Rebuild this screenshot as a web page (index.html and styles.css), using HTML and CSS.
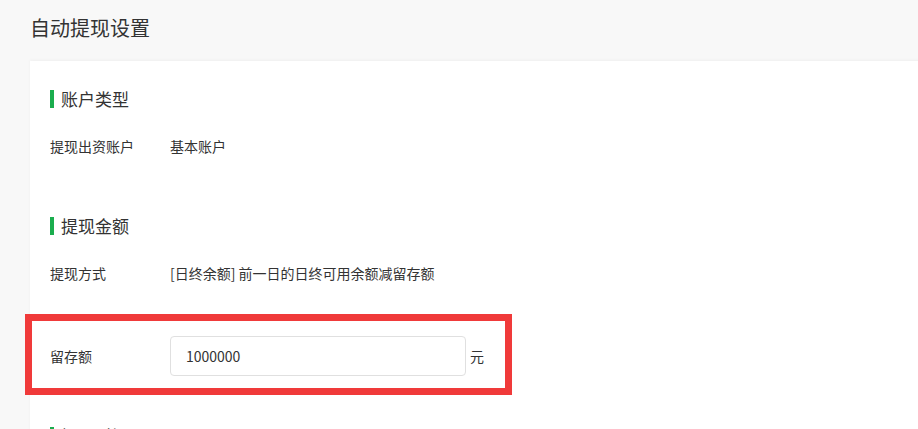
FILE: index.html
```html
<!DOCTYPE html>
<html lang="zh-CN">
<head>
    <meta charset="UTF-8">
    <meta name="viewport" content="width=device-width, initial-scale=1.0">
    <title>自动提现设置</title>
    <link rel="stylesheet" href="styles.css">
</head>
<body>

    <div class="page-header">
        <h1>自动提现设置</h1>
    </div>

    <div class="card">
        <div class="section">
            <h2 class="section-title">账户类型</h2>
            <div class="form-item">
                <label class="form-label">提现出资账户</label>
                <div class="form-value">基本账户</div>
            </div>
        </div>

        <div class="section">
            <h2 class="section-title">提现金额</h2>
            <div class="form-item">
                <label class="form-label">提现方式</label>
                <div class="form-value">[日终余额] 前一日的日终可用余额减留存额</div>
            </div>
            <div class="form-item highlighted">
                <label class="form-label" for="reserveAmount">留存额</label>
                <div class="form-value">
                    <input type="text" id="reserveAmount" value="1000000">
                    <span class="unit">元</span>
                </div>
                <span class="highlight-box"></span>
            </div>
        </div>

        <div class="section">
            <h2 class="section-title">提现时间</h2>
        </div>
    </div>

</body>
</html>
```

FILE: styles.css
```css
body {
    margin: 0;
    padding: 0;
    background-color: #f8f8f8;
    color: #333;
    font-family: "Microsoft YaHei", "Noto Sans CJK SC", sans-serif;
    font-size: 14px;
    overflow: hidden;
}

.page-header {
    height: 61px;
    padding-left: 30px;
    display: flex;
    align-items: center;
}

.page-header h1 {
    margin: 0;
    font-size: 20px;
    font-weight: normal;
    line-height: 1;
    margin-top: -6px;
}

.card {
    margin-left: 30px;
    margin-right: -20px;
    padding: 29px 20px 0;
    background-color: #fff;
    box-shadow: 0 -1px 3px rgba(0, 0, 0, 0.04);
    min-height: 400px;
}

.section {
    padding-bottom: 8px;
}

.section-title {
    margin: 0 0 18px;
    font-size: 17px;
    font-weight: normal;
    line-height: 18px;
    height: 18px;
    padding-left: 7px;
    border-left: 4px solid #1aad4e;
    display: flex;
    align-items: center;
}

.form-item {
    display: flex;
    align-items: center;
    height: 40px;
    margin-bottom: 43px;
}

.form-label {
    width: 120px;
    flex-shrink: 0;
}

.form-value {
    display: flex;
    align-items: center;
}

input[type="text"] {
    width: 296px;
    height: 40px;
    box-sizing: border-box;
    padding: 0 15px;
    border: 1px solid #e0e0e0;
    border-radius: 4px;
    font-family: inherit;
    font-size: 14px;
    color: #333;
    outline: none;
}

.unit {
    margin-left: 4px;
}

/* red frame drawn over the reserve amount row */
.highlighted {
    position: relative;
}

.highlight-box {
    position: absolute;
    left: -25px;
    top: -22px;
    width: 487px;
    height: 81px;
    box-sizing: border-box;
    border: 7px solid #f03a3a;
    pointer-events: none;
}
```
